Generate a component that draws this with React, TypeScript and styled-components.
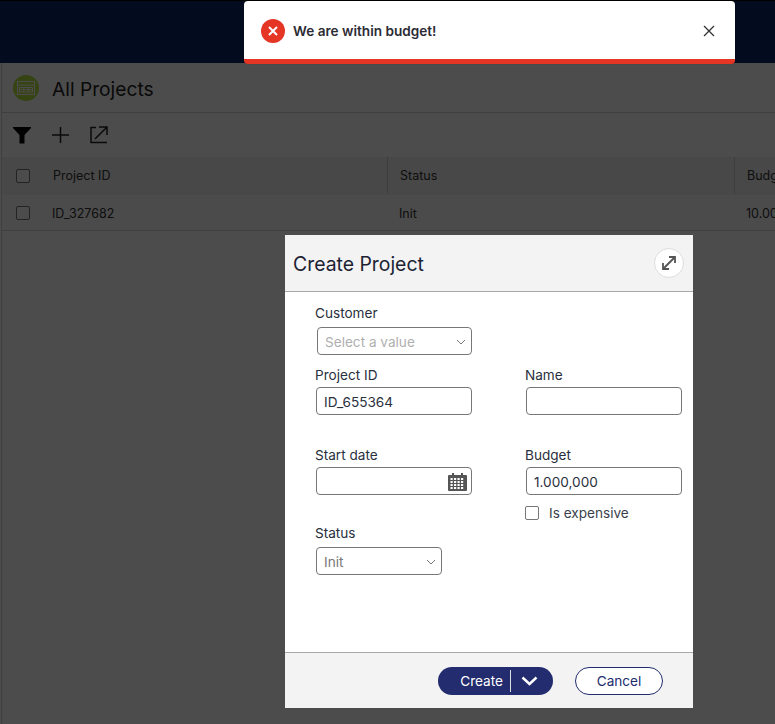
import React from "react";
import styled, { createGlobalStyle } from "styled-components";

const Global = createGlobalStyle`
  html, body { margin: 0; padding: 0; height: 100%; overflow: hidden; }
  body { font-family: Inter, "Noto Sans", "Liberation Sans", sans-serif; color: #1d2233; background: #fff; }
  #root { height: 100%; }
`;

const Page = styled.div`position: relative; width: 775px; height: 724px; overflow: hidden; background: #fff;`;
const TopBar = styled.header`height: 63px; background: #0a2a66; border-top: 1px solid #000;box-sizing:border-box;`;
const Panel = styled.section`margin-left: 1px; border-left: 1px solid #d8d8d8; height: 661px; box-sizing: border-box;`;
const TitleRow = styled.div`height: 50px; display: flex; align-items: center; gap: 13px; padding: 2px 0 0 11px; border-bottom: 1px solid #d4d4d4; box-sizing: border-box;`;
const TitleBadge = styled.div`width: 26px; height: 26px; border-radius: 50%; background: #b4e040; display: flex; align-items: center; justify-content: center; margin-top: -2px;`;
const PageTitle = styled.h1`margin: 0; font-size: 19.2px; font-weight: 400; color: #222;`;
const Toolbar = styled.div`height: 44px; display: flex; align-items: center; gap: 21px; padding-left: 11px; box-sizing: border-box;`;
const TableRow = styled.div<{ $head?: boolean }>`
  display: grid; grid-template-columns: 50px 335px 347px 100px; height: ${p => (p.$head ? 38 : 36)}px; align-items: center;
  font-size: 12.5px; background: ${p => (p.$head ? "#f0f0f0" : "#fbfbfb")}; color: #333;
  padding: ${p => (p.$head ? "0 0 1px" : "1px 0 0")}; box-sizing: border-box;
  ${p => (p.$head ? "" : "border-bottom: 1px solid #d8d8d8;")}
`;
const TableCheckCell = styled.div`padding-left: 14px; display: flex;`;
const TableCell = styled.div<{ $divided?: boolean; $pad: number }>`
  height: 100%; display: flex; align-items: center; white-space: nowrap; overflow: hidden; padding-left: ${p => p.$pad}px; box-sizing: border-box;
  ${p => (p.$divided ? "border-left: 1px solid #ccc;" : "")}
`;
const CheckBox = styled.span`width: 14px; height: 14px; box-sizing: border-box; border: 1px solid #777; border-radius: 2px; background: #fff; display: block; flex: none;`;

const Backdrop = styled.div`position: absolute; inset: 0; background: rgba(0, 0, 0, 0.7);`;

const Toast = styled.div`
  position: absolute; left: 244px; top: 1px; width: 491px; height: 63px; background: #fff; border-radius: 4px;
  overflow: hidden; display: flex; align-items: center; box-sizing: border-box; padding: 1px 20px 0 17px; border-bottom: 5px solid #e43525;
  box-shadow: 0 0 1px rgba(0,0,0,.4);
`;
const ToastIcon = styled.div`width: 24px; height: 24px; border-radius: 50%; background: #e43525; display: flex; align-items: center; justify-content: center;`;
const ToastText = styled.div`margin-left: 8px; font-size: 13.6px; font-weight: 600; color: #2b2b33; flex: 1;`;
const ToastClose = styled.div`display: flex; color: #333;`;

const Modal = styled.div`position: absolute; left: 285px; top: 235px; width: 408px; height: 473px; background: #fff; display: flex; flex-direction: column;`;
const ModalHead = styled.div`height: 57px; background: #f3f3f3; border-bottom: 1px solid #a8a8a8; box-sizing: border-box; display: flex; align-items: center; justify-content: space-between; padding: 0 9px 0 8px;`;
const ModalTitle = styled.h2`margin: 2px 0 0; font-size: 19.4px; font-weight: 400; color: #1d2233;`;
const RoundBtn = styled.div`width: 28px; height: 28px; border-radius: 50%; background: #fff; border: 1px solid #ddd; display: flex; align-items: center; justify-content: center;`;
const ModalBody = styled.div`flex: 1; display: flex; padding-left: 30px;`;
const Column = styled.div<{ $w: number }>`width: ${p => p.$w}px; display: flex; flex-direction: column;`;
const Field = styled.div<{ $top: number }>`margin-top: ${p => p.$top}px;`;
const Label = styled.div<{ $gap: number }>`font-size: 13.6px; line-height: 14px; height: 14px; color: #2a2f3d; margin-bottom: ${p => p.$gap}px;`;
const Control = styled.div<{ $w: number; $x?: number; $color?: string; $tight?: boolean }>`
  margin-left: ${p => p.$x ?? 1}px; width: ${p => p.$w}px; height: 28px; box-sizing: border-box; border: 1px solid #777; border-radius: 4px; background: #fff;
  display: flex; align-items: center; justify-content: space-between; padding: 1px ${p => (p.$tight ? 4 : 5)}px 0 7px; font-size: 13.6px; color: ${p => p.$color ?? "#2a2f3d"};
`;
const CheckRow = styled.div`display: flex; align-items: center; gap: 10px; font-size: 13.6px; color: #3a3f4d; margin-top: 10px;`;
const ModalFoot = styled.div`height: 56px; background: #f3f3f3; border-top: 1px solid #a8a8a8; box-sizing: border-box; display: flex; align-items: center; justify-content: flex-end; padding-right: 30px; gap: 22px;`;
const SplitBtn = styled.div`width: 115px; height: 28px; border-radius: 14px; background: #222c6e; color: #fff; display: flex; align-items: center; font-size: 13.6px;`;
const SplitLabel = styled.div`width: 73px; height: 22px; display: flex; align-items: center; justify-content: flex-end; padding-right: 7px; box-sizing: border-box; border-right: 1px solid #ddd;`;
const SplitArrow = styled.div`flex: 1; display: flex; justify-content: center; padding-right: 5px;`;
const OutlineBtn = styled.div`width: 88px; height: 28px; border-radius: 14px; box-sizing: border-box; background: #fff; border: 1px solid #222c6e; color: #222c6e; display: flex; align-items: center; justify-content: center; font-size: 13.6px;`;

const Chevron = () => (
  <svg width="10" height="6" viewBox="0 0 10 6" fill="none" stroke="#777" strokeWidth="1"><path d="M1 1l4 4 4-4" /></svg>
);
const Calendar = () => (
  <svg width="19" height="18" viewBox="0 0 19 18" fill="#555">
    <path d="M4 0h2v2h7V0h2v2h3a1 1 0 0 1 1 1v14a1 1 0 0 1-1 1H1a1 1 0 0 1-1-1V3a1 1 0 0 1 1-1h3z" />
    <g fill="#fff">
      {[6, 9, 12, 15].flatMap(y => [2.5, 6, 9.5, 13].map(x => <rect key={`${x}-${y}`} x={x} y={y - 1} width="2.2" height="2" />))}
    </g>
  </svg>
);

export default function App() {
  return (
    <Page>
      <Global />
      <TopBar />
      <Panel>
        <TitleRow>
          <TitleBadge>
            <svg width="18" height="14" viewBox="0 0 18 14" fill="none" stroke="#fff" strokeWidth="1"><rect x=".5" y=".5" width="17" height="13" /><path d="M.5 4h17M2.500 6.500h13v4.500h-13zM2.500 8.750h13M6.800 6.500V11M11.200 6.500V11" /></svg>
          </TitleBadge>
          <PageTitle>All Projects</PageTitle>
        </TitleRow>
        <Toolbar>
          <svg width="18" height="17" viewBox="0 0 18 17" fill="#000"><path d="M0 0h18v1l-6.500 7v8.500h-5V8L0 1z" /></svg>
          <svg width="17" height="16" viewBox="0 0 17 16" stroke="#222" strokeWidth="1.5"><path d="M8.500 0v16M0 8h17" /></svg>
          <svg width="18" height="18" viewBox="0 0 18 18" fill="none" stroke="#222" strokeWidth="1.500"><path d="M6 1.500H1v15h16" /><path d="M5 13L17 1M9 1h8v8" /></svg>
        </Toolbar>
        <TableRow $head>
          <TableCheckCell><CheckBox /></TableCheckCell>
          <TableCell $pad={1}>Project ID</TableCell>
          <TableCell $divided $pad={12}>Status</TableCell>
          <TableCell $divided $pad={12}>Budget</TableCell>
        </TableRow>
        <TableRow>
          <TableCheckCell><CheckBox /></TableCheckCell>
          <TableCell $pad={0}>ID_327682</TableCell>
          <TableCell $pad={12}>Init</TableCell>
          <TableCell $pad={12}>10.000,000</TableCell>
        </TableRow>
      </Panel>
      <Backdrop />
      <Toast>
        <ToastIcon>
          <svg width="12" height="12" viewBox="0 0 12 12" stroke="#fff" strokeWidth="2"><path d="M2 2l8 8M10 2l-8 8" /></svg>
        </ToastIcon>
        <ToastText>We are within budget!</ToastText>
        <ToastClose>
          <svg width="12" height="12" viewBox="0 0 12 12" stroke="#333" strokeWidth="1.3"><path d="M1 1l10 10M11 1L1 11" /></svg>
        </ToastClose>
      </Toast>
      <Modal>
        <ModalHead>
          <ModalTitle>Create Project</ModalTitle>
          <RoundBtn>
            <svg width="16" height="16" viewBox="0 0 16 16" fill="none" stroke="#555" strokeWidth="1.8"><path d="M2 14L14 2M8 2h6v6M2 8v6h6" /></svg>
          </RoundBtn>
        </ModalHead>
        <ModalBody>
          <Column $w={210}>
            <Field $top={14}>
              <Label $gap={7}>Customer</Label>
              <Control $w={155} $x={2} $color="#b0b0b0"><span>Select a value</span><Chevron /></Control>
            </Field>
            <Field $top={13}>
              <Label $gap={5}>Project ID</Label>
              <Control $w={156}>ID_655364</Control>
            </Field>
            <Field $top={33}>
              <Label $gap={5}>Start date</Label>
              <Control $w={156} $tight><span /><Calendar /></Control>
            </Field>
            <Field $top={31}>
              <Label $gap={7}>Status</Label>
              <Control $w={126} $color="#777"><span>Init</span><Chevron /></Control>
            </Field>
          </Column>
          <Column $w={160}>
            <Field $top={76}>
              <Label $gap={5}>Name</Label>
              <Control $w={156} />
            </Field>
            <Field $top={33}>
              <Label $gap={5}>Budget</Label>
              <Control $w={156}><span>1.000,000</span></Control>
              <CheckRow><CheckBox />Is expensive</CheckRow>
            </Field>
          </Column>
        </ModalBody>
        <ModalFoot>
          <SplitBtn>
            <SplitLabel>Create</SplitLabel>
            <SplitArrow>
              <svg width="17" height="10" viewBox="0 0 17 10" fill="none" stroke="#fff" strokeWidth="2.4"><path d="M1.500 1.500L8.500 8l7-6.500" /></svg>
            </SplitArrow>
          </SplitBtn>
          <OutlineBtn>Cancel</OutlineBtn>
        </ModalFoot>
      </Modal>
    </Page>
  );
}
